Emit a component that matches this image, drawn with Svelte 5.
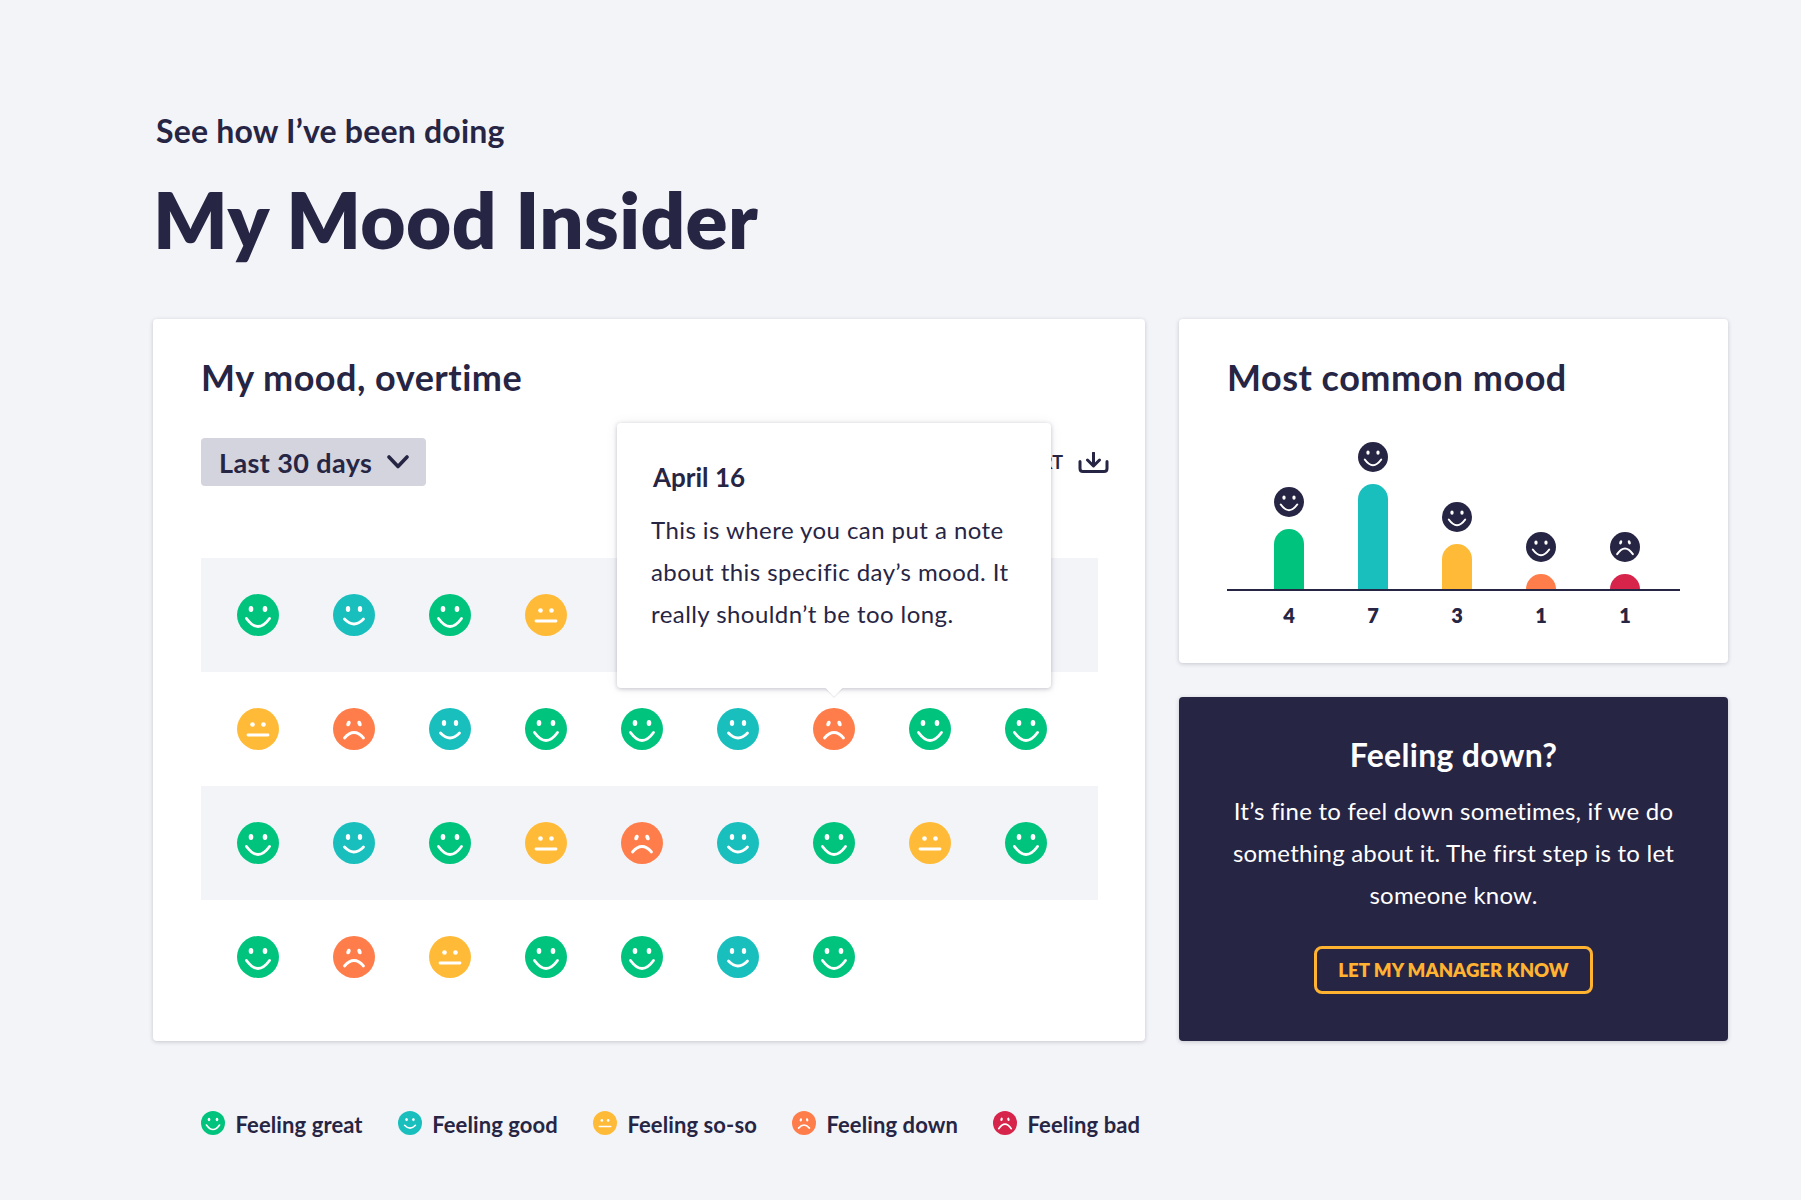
<script>
  const rows = [
    ['great', 'good', 'great', 'soso', 'down', 'good', 'great', 'soso', 'great'],
    ['soso', 'down', 'good', 'great', 'great', 'good', 'down', 'great', 'great'],
    ['great', 'good', 'great', 'soso', 'down', 'good', 'great', 'soso', 'great'],
    ['great', 'down', 'soso', 'great', 'great', 'good', 'great']
  ];

  const bars = [
    { mood: 'great', count: 4 },
    { mood: 'good', count: 7 },
    { mood: 'soso', count: 3 },
    { mood: 'down', count: 1 },
    { mood: 'bad', count: 1 }
  ];

  const legend = [
    { mood: 'great', label: 'Feeling great' },
    { mood: 'good', label: 'Feeling good' },
    { mood: 'soso', label: 'Feeling so-so' },
    { mood: 'down', label: 'Feeling down' },
    { mood: 'bad', label: 'Feeling bad' }
  ];

  const barUnit = 15;
</script>

{#snippet face(mood, size, dark = false)}
  <svg class="face {mood}" class:dark width={size} height={size} viewBox="0 0 42 42">
    <circle class="disc" cx="21" cy="21" r="21" />
    {#if mood === 'great'}
      <ellipse class="eye" cx="14" cy="15" rx="2.3" ry="3" />
      <ellipse class="eye" cx="28" cy="15" rx="2.3" ry="3" />
      <path class="line" d="M9.5 24.5Q21 40.5 32.5 24.5" />
    {:else if mood === 'good'}
      <ellipse class="eye" cx="15" cy="15" rx="2.2" ry="2.9" />
      <ellipse class="eye" cx="27" cy="15" rx="2.2" ry="2.9" />
      <path class="line" d="M11.5 25Q21 35 30.5 25" />
    {:else if mood === 'soso'}
      <circle class="eye" cx="15.5" cy="16.5" r="2.3" />
      <circle class="eye" cx="26.5" cy="16.5" r="2.3" />
      <path class="line flat" d="M11 27H31" />
    {:else if mood === 'down'}
      <ellipse class="eye" cx="15.5" cy="15.5" rx="2" ry="2.9" transform="rotate(18 15.5 15.5)" />
      <ellipse class="eye" cx="26.5" cy="15.5" rx="2" ry="2.9" transform="rotate(-18 26.5 15.5)" />
      <path class="line" d="M11.5 30Q21 19 30.5 30" />
    {:else}
      <ellipse class="eye" cx="15" cy="14.5" rx="2" ry="3" transform="rotate(18 15 14.5)" />
      <ellipse class="eye" cx="27" cy="14.5" rx="2" ry="3" transform="rotate(-18 27 14.5)" />
      <path class="line" d="M10 31Q21 15 32 31" />
    {/if}
  </svg>
{/snippet}

<div class="page">
  <p class="kicker">See how I’ve been doing</p>
  <h1>My Mood Insider</h1>

  <div class="cards">
    <section class="card overtime">
      <h2>My mood, overtime</h2>

      <div class="toolbar">
        <button class="range">
          <span>Last 30 days</span>
          <svg width="22" height="14" viewBox="0 0 22 14">
            <path d="M2 2 11 11.5 20 2" />
          </svg>
        </button>
        <button class="export">
          EXPORT
          <svg width="31" height="21" viewBox="0 0 31 21">
            <path d="M2 9.5V16.5Q2 19.5 5 19.5H26Q29 19.5 29 16.5V9.5M15.5 1V13.5M9.5 8 15.5 14 21.5 8" />
          </svg>
        </button>
      </div>

      <div class="grid">
        {#each rows as row}
          <div class="row">
            {#each row as mood}
              {@render face(mood, 42)}
            {/each}
          </div>
        {/each}
      </div>

      <div class="tooltip">
        <h3>April 16</h3>
        <p>This is where you can put a note<br />about this specific day’s mood. It<br />really shouldn’t be too long.</p>
      </div>
    </section>

    <div class="side">
      <section class="card common">
        <h2>Most common mood</h2>
        <div class="chart">
          {#each bars as bar}
            <div class="col">
              {@render face(bar.mood === 'bad' ? 'bad' : 'great', 30, true)}
              <div class="bar {bar.mood}" style="height: {bar.count * barUnit}px"></div>
            </div>
          {/each}
        </div>
        <div class="counts">
          {#each bars as bar}
            <span>{bar.count}</span>
          {/each}
        </div>
      </section>

      <section class="card promo">
        <h3>Feeling down?</h3>
        <p>It’s fine to feel down sometimes, if we do<br />something about it. The first step is to let<br />someone know.</p>
        <button class="notify">LET MY MANAGER KNOW</button>
      </section>
    </div>
  </div>

  <ul class="legend">
    {#each legend as item}
      <li>
        {@render face(item.mood, 24)}
        <span>{item.label}</span>
      </li>
    {/each}
  </ul>
</div>

<style>
  :global(body) {
    margin: 0;
    background: #f3f4f8;
  }

  .page {
    width: 1575px;
    height: 1200px;
    padding: 111px 73px 0 153px;
    box-sizing: border-box;
    font-family: Lato, "Open Sans", sans-serif;
    color: #272544;
  }

  .kicker {
    margin: 0 0 0 3px;
    font-size: 32px;
    line-height: 40px;
    font-weight: 700;
    letter-spacing: 0.2px;
  }

  h1 {
    margin: 23px 0 0;
    font-size: 78px;
    line-height: 90px;
    font-weight: 800;
    letter-spacing: 0.37px;
  }

  .cards {
    display: grid;
    grid-template-columns: 992px 549px;
    gap: 34px;
    margin-top: 55px;
  }

  .card {
    background: #fff;
    border-radius: 4px;
    box-shadow: 0 1px 4px rgba(39, 37, 68, 0.22);
    box-sizing: border-box;
  }

  h2 {
    margin: 0;
    font-size: 36px;
    line-height: 38px;
    font-weight: 700;
    letter-spacing: 0.5px;
  }

  .overtime {
    position: relative;
    height: 722px;
    padding: 39px 47px 0 48px;
  }

  .toolbar {
    display: flex;
    justify-content: space-between;
    align-items: center;
    margin: 42px -11px 72px 0;
  }

  .range {
    display: flex;
    align-items: center;
    justify-content: space-between;
    width: 225px;
    height: 48px;
    padding: 0 17px 0 18px;
    box-sizing: border-box;
    border: 0;
    border-radius: 4px;
    background: #d4d4de;
    color: inherit;
    font: 700 27px Lato, sans-serif;
    letter-spacing: 0.4px;
    white-space: nowrap;
  }

  .range svg path {
    fill: none;
    stroke: #272544;
    stroke-width: 3.6;
    stroke-linecap: round;
    stroke-linejoin: round;
  }

  .export {
    display: flex;
    align-items: center;
    gap: 15px;
    padding: 0;
    border: 0;
    background: none;
    color: inherit;
    font: 700 18px Lato, sans-serif;
  }

  .export svg path {
    fill: none;
    stroke: #272544;
    stroke-width: 3;
    stroke-linecap: round;
    stroke-linejoin: round;
  }

  .row {
    display: flex;
    align-items: center;
    gap: 54px;
    height: 114px;
    padding-left: 36px;
  }

  .row:nth-child(odd) {
    background: #f3f4f8;
  }

  .tooltip {
    position: absolute;
    left: 464px;
    top: 104px;
    width: 434px;
    height: 265px;
    padding: 36px 34px 0;
    box-sizing: border-box;
    background: #fff;
    border-radius: 4px;
    box-shadow: 0 1px 4px rgba(39, 37, 68, 0.25), 0 0 14px rgba(39, 37, 68, 0.06);
  }

  .tooltip::after {
    content: "";
    position: absolute;
    left: 211px;
    bottom: -6px;
    width: 12px;
    height: 12px;
    background: #fff;
    transform: rotate(45deg);
    box-shadow: 1px 1px 1px rgba(39, 37, 68, 0.08);
  }

  .tooltip h3 {
    margin: 0 0 14px 2px;
    font-size: 26px;
    line-height: 36px;
    font-weight: 700;
  }

  .tooltip p,
  .promo p {
    margin: 0;
    font-size: 24px;
    line-height: 42px;
    font-weight: 400;
  }

  .tooltip p {
    letter-spacing: 0.44px;
  }

  .promo p {
    letter-spacing: 0.22px;
  }

  .side {
    display: flex;
    flex-direction: column;
    gap: 34px;
  }

  .common {
    height: 344px;
    padding: 39px 48px 0;
  }

  .chart {
    display: flex;
    align-items: flex-end;
    height: 193px;
    padding-left: 20px;
    border-bottom: 2px solid #272544;
  }

  .col {
    display: flex;
    flex-direction: column;
    align-items: center;
    gap: 12px;
    width: 84px;
  }

  .bar {
    width: 30px;
    border-radius: 15px 15px 0 0;
  }

  .bar.great { background: #00c47d; }
  .bar.good { background: #19bfbd; }
  .bar.soso { background: #ffbb38; }
  .bar.down { background: #ff7d4a; }
  .bar.bad { background: #d6244a; }

  .counts {
    display: flex;
    padding: 12px 0 0 20px;
  }

  .counts span {
    width: 84px;
    text-align: center;
    font-size: 20px;
    line-height: 24px;
    font-weight: 800;
  }

  .promo {
    height: 344px;
    padding-top: 40px;
    background: #272544;
    color: #fff;
    text-align: center;
  }

  .promo h3 {
    margin: 0 0 17px;
    font-size: 32px;
    line-height: 36px;
    font-weight: 700;
    letter-spacing: 0.3px;
  }

  .notify {
    width: 279px;
    height: 48px;
    margin-top: 30px;
    padding: 0;
    border: 3px solid #ffb330;
    border-radius: 8px;
    background: none;
    color: #ffb330;
    font: 800 18.6px Lato, sans-serif;
  }

  .legend {
    display: flex;
    margin: 69px 0 0 48px;
    padding: 0;
    list-style: none;
    gap: 35px;
  }

  .legend li {
    display: flex;
    align-items: center;
    gap: 10.5px;
    font-size: 22px;
    line-height: 30px;
    font-weight: 700;
    letter-spacing: 0.1px;
  }

  .legend li .face {
    margin-bottom: 4px;
  }

  .face {
    display: block;
    flex: none;
  }

  .disc { fill: #00c47d; }
  .good .disc { fill: #19bfbd; }
  .soso .disc { fill: #ffbb38; }
  .down .disc { fill: #ff7d4a; }
  .bad .disc { fill: #d6244a; }
  .dark .disc { fill: #272544; }

  .eye { fill: #fff; }

  .line {
    fill: none;
    stroke: #fff;
    stroke-width: 2.8;
    stroke-linecap: round;
  }
</style>
